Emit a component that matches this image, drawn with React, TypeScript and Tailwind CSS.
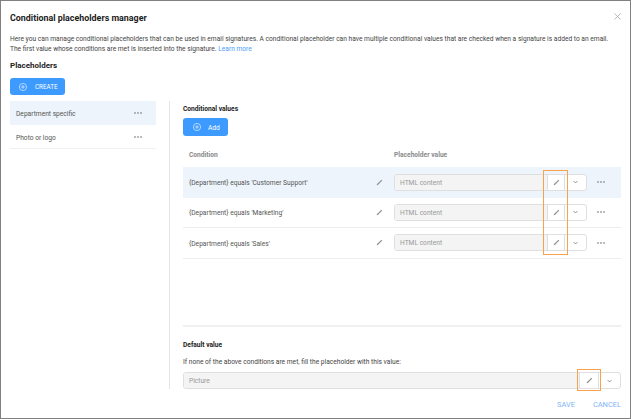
const font = { fontFamily: 'Roboto, "Open Sans", "Liberation Sans", sans-serif' };

function PlusCircle() {
  return (
    <svg width="8" height="8" viewBox="0 0 12 12" fill="none" stroke="currentColor" strokeWidth="0.9">
      <circle cx="6" cy="6" r="5.4" />
      <path d="M3.2 6h5.6M6 3.2v5.6" />
    </svg>
  );
}

function Pencil() {
  return (
    <svg width="7" height="7" viewBox="0 0 12 12" fill="#949494">
      <path d="M1.2 10.8l.5-2.4L8.8 1.6a.7.7 0 0 1 1 0l.6.6a.7.7 0 0 1 0 1L3.4 10.2z" />
    </svg>
  );
}

function Chevron() {
  return (
    <svg width="5" height="4" viewBox="0 0 8 6" fill="none" stroke="#777" strokeWidth="1.3">
      <path d="M1 1.5l3 3 3-3" />
    </svg>
  );
}

function Dots() {
  return (
    <svg width="8" height="2" viewBox="0 0 8 2" fill="#666">
      <circle cx="1" cy="1" r="0.8" />
      <circle cx="4" cy="1" r="0.8" />
      <circle cx="7" cy="1" r="0.8" />
    </svg>
  );
}

function ValueInput({ text, small }: { text: string; small?: boolean }) {
  return (
    <div className="flex h-[17px] flex-1 items-stretch rounded-[3px] border border-[#dfdfdf] bg-white">
      <div className="flex flex-1 items-center rounded-l-[3px] bg-[#f4f4f4] pt-[3px] pl-[5px] text-[6.65px] text-[#999]">{text}</div>
      <div className={`flex items-center justify-center border-x border-[#dfdfdf] ${small ? "w-[20px]" : "w-[18px]"}`}>
        <Pencil />
      </div>
      <div className="flex w-[21px] items-center justify-center">
        <Chevron />
      </div>
    </div>
  );
}

const rows = [
  { label: "{Department} equals 'Customer Support'", active: true },
  { label: "{Department} equals 'Marketing'", active: false },
  { label: "{Department} equals 'Sales'", active: false },
];

export default function App() {
  return (
    <div style={font} className="h-[419px] w-[631px] overflow-hidden border border-[#808080] bg-white text-[#333]">
      {/* Header */}
      <div className="relative px-[9px] pt-[11px]">
        <h1 className="text-[8.9px] leading-[13px] font-bold text-[#1c1c1c]">Conditional placeholders manager</h1>
        <svg className="absolute top-[12px] right-[9px]" width="7" height="7" viewBox="0 0 8 8" stroke="#aaa" strokeWidth="0.9">
          <path d="M.5.5l7 7M7.5.5l-7 7" />
        </svg>
        <p className="mt-[9px] text-[6.65px] leading-[10px] text-[#444]">
          Here you can manage conditional placeholders that can be used in email signatures. A conditional placeholder can have multiple conditional values that are checked when a signature is added to an email.
          <br />
          The first value whose conditions are met is inserted into the signature. <span className="text-[#4a9eff]">Learn more</span>
        </p>
        <h2 className="mt-[5px] text-[8px] leading-[13px] font-bold text-[#1c1c1c]">Placeholders</h2>
        <button className="mt-[6px] flex h-[17px] w-[55px] items-center gap-[8px] rounded-[3px] bg-[#3d9bff] pl-[9px] text-[6.3px] text-white">
          <PlusCircle />
          <span className="pt-[3px]">CREATE</span>
        </button>
      </div>

      <div className="mt-[6px] flex">
        {/* Placeholder list */}
        <div className="ml-[9px] w-[146px]">
          <div className="flex h-[24px] items-center justify-between bg-[#edf4fb] pr-[14px] pl-[6px] text-[6.65px] text-[#555]">
            <span className="pt-[4px]">Department specific</span>
            <Dots />
          </div>
          <div className="flex h-[24px] items-center justify-between border-b border-[#f0f0f0] pr-[14px] pl-[6px] text-[6.65px] text-[#555]">
            <span className="pt-[4px]">Photo or logo</span>
            <Dots />
          </div>
        </div>

        {/* Right panel */}
        <div className="ml-[13px] flex h-[288px] w-[452px] flex-col border-l border-[#e4e4e4] pl-[13px]">
          <h3 className="mt-[3px] text-[6.65px] leading-[11px] font-bold text-[#1c1c1c]">Conditional values</h3>
          <button className="mt-[3px] flex h-[18px] w-[45px] items-center gap-[7px] rounded-[3px] bg-[#3d9bff] pl-[10px] text-[6.65px] text-white">
            <PlusCircle />
            <span className="pt-[3px]">Add</span>
          </button>

          <div className="mt-[15px] flex h-[16px] w-[438px] text-[6.65px] font-bold text-[#8a8a8a]">
            <div className="w-[211px] pl-[6px]">Condition</div>
            <div>Placeholder value</div>
          </div>

          <div className="relative w-[438px]">
            {rows.map((row) => (
              <div
                key={row.label}
                className={`flex h-[30.5px] items-center pr-[14px] pl-[6px] text-[6.65px] text-[#555] ${row.active ? "bg-[#edf4fb]" : "border-b border-[#eeeeee]"}`}
              >
                <div className="w-[181px] pt-[4px]">{row.label}</div>
                <div className="mr-[5px] flex w-[19px] justify-center">
                  <Pencil />
                </div>
                <div className="flex flex-1 items-center">
                  <ValueInput text="HTML content" />
                </div>
                <div className="ml-[10px] w-[10px]">
                  <Dots />
                </div>
              </div>
            ))}
            <div className="absolute top-[3px] left-[360px] h-[85px] w-[25px] border border-[#f7a24f]" />
          </div>

          <div className="mt-auto w-[438px] border-t-2 border-[#f0f0f0] pt-[13px]">
            <h3 className="text-[6.65px] leading-[11px] font-bold text-[#1c1c1c]">Default value</h3>
            <p className="mt-[6px] text-[6.65px] leading-[11px] text-[#444]">If none of the above conditions are met, fill the placeholder with this value:</p>
            <div className="relative mt-[4px] flex">
              <ValueInput text="Picture" small />
              <div className="absolute top-[-3px] left-[394px] h-[22px] w-[24px] border border-[#f7a24f]" />
            </div>
          </div>
        </div>
      </div>

      {/* Footer */}
      <div className="mt-[11px] flex justify-end gap-[18px] pr-[9px] text-[7.45px] leading-[10px] text-[#7fb4f5]">
        <span>SAVE</span>
        <span>CANCEL</span>
      </div>
    </div>
  );
}
